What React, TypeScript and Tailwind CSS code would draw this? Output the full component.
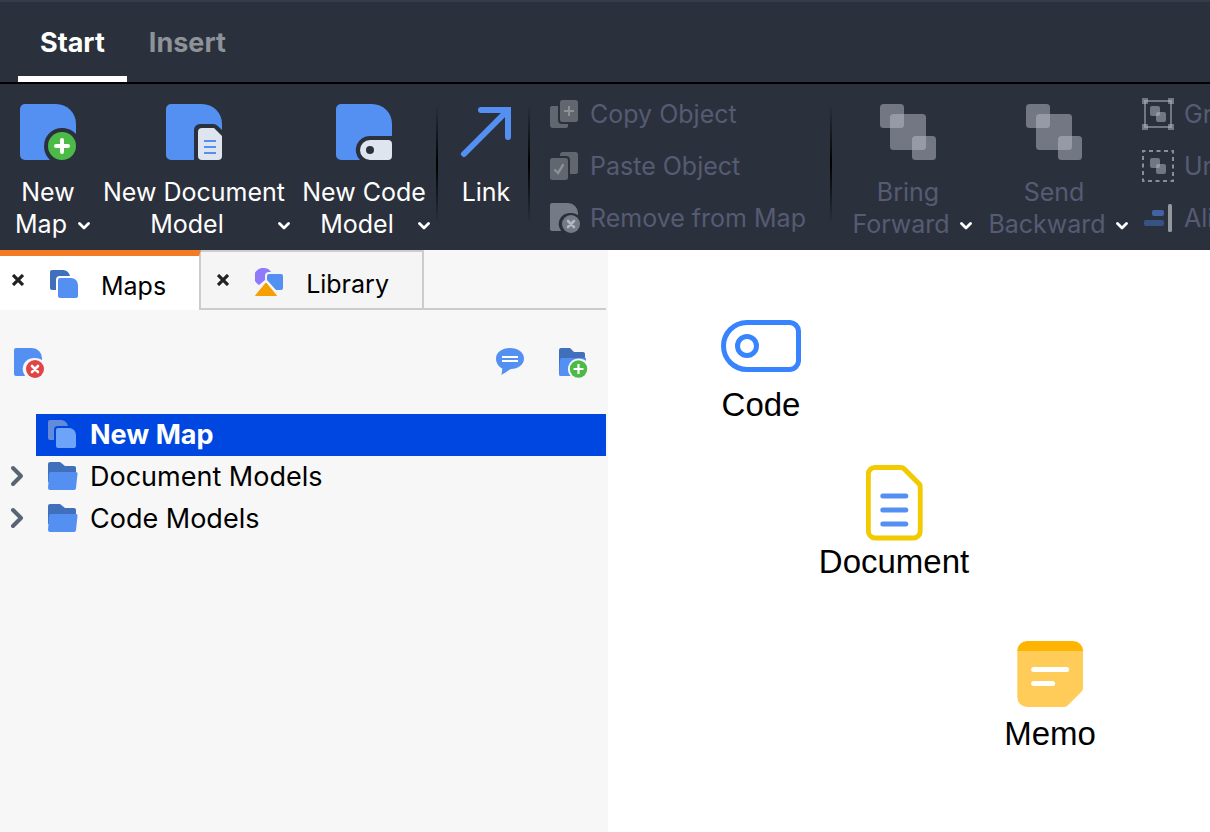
import React, { useState } from "react";
import clsx from "clsx";

const BLUE = "#5490F2";
const DARK_BLUE = "#4070BB";

// Icons

const Chevron = () => (
  <svg viewBox="0 0 12 8" className="mt-1 h-2 w-3 shrink-0" fill="none" stroke="white" strokeWidth="2.8" strokeLinecap="round" strokeLinejoin="round">
    <path d="M1.5 1.6 6 6.1l4.500-4.500" />
  </svg>
);

const ExpandArrow = () => (
  <svg viewBox="0 0 14 22" className="h-[22px] w-3.5" fill="none" stroke="#596572" strokeWidth="4" strokeLinecap="round" strokeLinejoin="round">
    <path d="M3 3l8 8-8 8" />
  </svg>
);

const CloseIcon = () => (
  <svg viewBox="0 0 12 12" className="h-3 w-3" stroke="#222" strokeWidth="3.200">
    <path d="M1 1l10 10M11 1L1 11" />
  </svg>
);

const NewMapIcon = () => (
  <svg viewBox="0 0 56 56" className="h-14 w-14">
    <path d="M5 0h31a20 20 0 0 1 20 20v31a5 5 0 0 1-5 5H5a5 5 0 0 1-5-5V5a5 5 0 0 1 5-5z" fill={BLUE} />
    <path d="M42 24c6 0 11 2.500 14.500 6.500V57H31c-4.300-3.500-7-9-7-15a18 18 0 0 1 18-18z" fill="#2B313C" />
    <circle cx="42" cy="42" r="14" fill="#4BBA47" />
    <path d="M42 36v12M36 42h12" stroke="white" strokeWidth="4" strokeLinecap="round" />
  </svg>
);

const NewDocumentIcon = () => (
  <svg viewBox="0 0 56 56" className="h-14 w-14">
    <path d="M5 0h31a20 20 0 0 1 20 20v6l-4.500-4.300A6 6 0 0 0 47.500 20H34a6 6 0 0 0-6 6v30H5a5 5 0 0 1-5-5V5a5 5 0 0 1 5-5z" fill={BLUE} />
    <path d="M36 24h12l8 8v20a4 4 0 0 1-4 4H36a4 4 0 0 1-4-4V28a4 4 0 0 1 4-4z" fill="#DFE5EE" />
    <path d="M38 37h12M38 43h12M38 49h12" stroke={BLUE} strokeWidth="2" />
  </svg>
);

const NewCodeIcon = () => (
  <svg viewBox="0 0 56 56" className="h-14 w-14">
    <path d="M5 0h31a20 20 0 0 1 20 20v12H34a14 14 0 0 0-10 24H5a5 5 0 0 1-5-5V5a5 5 0 0 1 5-5z" fill={BLUE} />
    <path d="M34 36h18a4 4 0 0 1 4 4v12a4 4 0 0 1-4 4H34a10 10 0 0 1 0-20z" fill="#DFE5EE" />
    <circle cx="34" cy="46" r="4" fill="#2B313C" />
  </svg>
);

const LinkIcon = () => (
  <svg viewBox="0 0 56 56" className="h-14 w-14" fill="none" stroke={BLUE} strokeWidth="6" strokeLinecap="round">
    <path d="M6 50 49 7" />
    <path d="M23 6h27v27" />
  </svg>
);

const CopyIcon = () => (
  <svg viewBox="0 0 28 28" className="h-7 w-7">
    <path d="M2 6h6v14a4 4 0 0 0 4 4h6v2a2 2 0 0 1-2 2H3a3 3 0 0 1-3-3V8a2 2 0 0 1 2-2z" fill="#61666F" />
    <rect x="10" width="18" height="22" rx="2.500" fill="#61666F" />
    <path d="M19 6v10M14 11h10" stroke="#8B8F97" strokeWidth="2" />
  </svg>
);

const PasteIcon = () => (
  <svg viewBox="0 0 28 28" className="h-7 w-7">
    <path d="M10 4V3a3 3 0 0 1 3-3h12.500A2.500 2.500 0 0 1 28 2.500v17a2.500 2.500 0 0 1-2.500 2.500H20V8a4 4 0 0 0-4-4z" fill="#61666F" />
    <rect y="6" width="18" height="22" rx="2.500" fill="#61666F" />
    <path d="M5 18l3 3 5-8" fill="none" stroke="#8B8F97" strokeWidth="2.400" strokeLinecap="round" />
  </svg>
);

interface IRemoveIcon {
  body: string;
  badge: string;
  cross: string;
  gap: string;
}

const RemoveIcon: React.FC<IRemoveIcon> = ({ body, badge, cross, gap }) => (
  <svg viewBox="0 0 30 30" className="h-[30px] w-[30px]">
    <path d="M2 0h16a10 10 0 0 1 10 10v18H2a2 2 0 0 1-2-2V2a2 2 0 0 1 2-2z" fill={body} />
    <path d="M21 10c3.500 0 7 1.500 9 4v16H13.500a11 11 0 0 1 7.500-20z" fill={gap} />
    <circle cx="21" cy="21" r="9" fill={badge} />
    <path d="M18 18l6 6M24 18l-6 6" stroke={cross} strokeWidth="2.600" strokeLinecap="round" />
  </svg>
);

const OrderIcon = () => (
  <svg viewBox="0 0 56 56" className="h-14 w-14" fill="#B9BECA" fillOpacity=".5">
    <rect width="24" height="24" rx="3.500" />
    <rect x="10" y="10" width="36" height="36" rx="3.500" />
    <rect x="32" y="32" width="24" height="24" rx="3.500" />
  </svg>
);

const GroupIcon = () => (
  <svg viewBox="0 0 32 32" className="h-8 w-8" fill="#B9BECA" fillOpacity=".5">
    <rect x="3" y="3" width="26" height="26" fill="none" stroke="#73777F" strokeWidth="2" />
    <path d="M0 0h6v6H0zM26 0h6v6h-6zM0 26h6v6H0zM26 26h6v6h-6z" />
    <rect x="8" y="8" width="10" height="10" rx="2" />
    <rect x="14" y="14" width="10" height="10" rx="2" />
  </svg>
);

const UngroupIcon = () => (
  <svg viewBox="0 0 32 32" className="h-8 w-8" fill="#B9BECA" fillOpacity=".5">
    <rect x="1" y="1" width="30" height="30" fill="none" stroke="#8A8E96" strokeWidth="2" strokeDasharray="4 3.500" strokeDashoffset="1.500" />
    <rect x="8" y="8" width="10" height="10" rx="2" />
    <rect x="14" y="14" width="10" height="10" rx="2" />
  </svg>
);

const AlignIcon = () => (
  <svg viewBox="0 0 32 32" className="h-8 w-8">
    <rect x="10" y="8" width="12" height="6" rx="2" fill="#4163A3" />
    <rect x="2" y="18" width="20" height="6" rx="2" fill="#365383" />
    <rect x="26" y="2" width="4" height="28" rx="1.500" fill="#94979E" />
  </svg>
);

const MapsIcon: React.FC<{ back?: string; front?: string }> = ({ back = DARK_BLUE, front = BLUE }) => (
  <svg viewBox="0 0 28 28" className="h-7 w-7 shrink-0">
    <path d="M2 0h11a7 7 0 0 1 7 6H10a4 4 0 0 0-4 4v10H2a2 2 0 0 1-2-2V2a2 2 0 0 1 2-2z" fill={back} />
    <path d="M10 8h11a7 7 0 0 1 7 7v11a2 2 0 0 1-2 2H10a2 2 0 0 1-2-2V10a2 2 0 0 1 2-2z" fill={front} />
  </svg>
);

const LibraryIcon = () => (
  <svg viewBox="0 0 28 28" className="h-7 w-7 shrink-0">
    <path d="M9 0c3 0 5.500 1.400 7 4h-2a4 4 0 0 0-4 4v4l-6 5A9 9 0 0 1 9 0z" fill="#8F7AFB" />
    <path d="M14 6h12a2 2 0 0 1 2 2v12a2 2 0 0 1-2 2h-5L12 12V8a2 2 0 0 1 2-2z" fill={BLUE} />
    <path d="M11 15 21.500 27.500H.500z" fill="#F59F00" stroke="#F59F00" strokeLinejoin="round" />
  </svg>
);

const CommentIcon = () => (
  <svg viewBox="0 0 28 28" className="h-7 w-7">
    <path d="M14 0c8 0 14 4.500 14 10.500S22 21 15 21c-3 1.500-6 4-9.500 6l.8-6.500C2.500 18.500 0 15 0 10.500 0 4.500 6 0 14 0z" fill={BLUE} />
    <path d="M6 9h16M6 13h16" stroke="white" strokeWidth="2" />
  </svg>
);

const AddFolderIcon = () => (
  <svg viewBox="0 0 30 30" className="h-[30px] w-[30px]">
    <path d="M3 0h9l4 4h9a2 2 0 0 1 2 2v20H1V2a2 2 0 0 1 2-2z" fill={DARK_BLUE} />
    <path d="M4 10h24v18H2.500A1.500 1.500 0 0 1 1 26.500L2 12a2 2 0 0 1 2-2z" fill={BLUE} />
    <path d="M20 10.500c4 0 7 1 10 4.500v15H15a10.500 10.500 0 0 1 5-19.500z" fill="#F7F7F7" />
    <circle cx="20.500" cy="21" r="8.700" fill="#4BBA47" />
    <path d="M20.500 16v10M15.500 21h10" stroke="white" strokeWidth="2.200" />
  </svg>
);

const FolderIcon = () => (
  <svg viewBox="0 0 30 28" className="h-7 w-[30px] shrink-0">
    <path d="M2 0h10l5 4h9a2 2 0 0 1 2 2v14H0V2a2 2 0 0 1 2-2z" fill={DARK_BLUE} />
    <path d="M3 10h25a1.500 1.500 0 0 1 1.500 1.700L28 26a2 2 0 0 1-2 2H2a2 2 0 0 1-2-2l1-14a2 2 0 0 1 2-2z" fill={BLUE} />
  </svg>
);

const CodeNodeIcon = () => (
  <svg viewBox="0 0 80 52" className="h-[52px] w-20" fill="none" stroke="#3884FF" strokeWidth="5">
    <path d="M26 2.500h42a9 9 0 0 1 9.500 9.500v28a9 9 0 0 1-9.500 9.500H26a23.500 23.500 0 0 1 0-47z" />
    <circle cx="26" cy="26" r="9.500" />
  </svg>
);

const DocumentNodeIcon = () => (
  <svg viewBox="0 0 57 76" className="h-[76px] w-[57px]" fill="none" strokeWidth="5">
    <path d="M9 2.500h26a5 5 0 0 1 3.500 1.500L52.500 18a5 5 0 0 1 2 4v44a7 7 0 0 1-7 7H9a7 7 0 0 1-6.500-7V9A6.500 6.500 0 0 1 9 2.500z" stroke="#F2CA00" />
    <path d="M17 31h23M17 45h23M17 59h23" stroke={BLUE} strokeLinecap="round" />
  </svg>
);

const MemoNodeIcon = () => (
  <svg viewBox="0 0 66 66" className="h-[66px] w-[66px]">
    <path d="M0 9h66v38a6 6 0 0 1-2 4L51 64a6 6 0 0 1-4 2H10A10 10 0 0 1 0 56z" fill="#FFCC59" />
    <path d="M10 0h46a10 10 0 0 1 10 10H0A10 10 0 0 1 10 0z" fill="#FFB500" />
    <path d="M16.500 28.500h33M16.500 42.500h19" stroke="white" strokeWidth="5" strokeLinecap="round" />
  </svg>
);

// Ribbon

interface IRibbonButton {
  icon: React.ReactNode;
  lines: string[];
  className: string;
  disabled?: boolean;
}

const RibbonButton: React.FC<IRibbonButton> = ({ icon, lines, className, disabled }) => (
  <button
    disabled={disabled}
    className={clsx("flex shrink-0 flex-col items-center whitespace-nowrap", disabled ? "text-[#565B73]" : "text-white", className)}
  >
    {icon}
    <span className="mt-4">{lines[0]}</span>
    {lines[1] && (
      <span className="flex w-full items-center gap-0.5">
        <span className="flex-1">{lines[1]}</span>
        <Chevron />
      </span>
    )}
  </button>
);

const SmallRibbonButton: React.FC<{ icon: React.ReactNode; label: string }> = ({ icon, label }) => (
  <button disabled className="flex h-8 items-center gap-2.5 whitespace-nowrap text-[#565B73]">
    <span className="min-w-[30px] shrink-0">{icon}</span>
    {label}
  </button>
);

const Separator = () => (
  <div className="h-30 w-0.5 shrink-0 bg-linear-to-b from-transparent via-black to-transparent" />
);

// Side panel

interface IPanelTab {
  icon: React.ReactNode;
  label: string;
  active: boolean;
  onSelect: () => void;
}

const PanelTab: React.FC<IPanelTab> = ({ icon, label, active, onSelect }) => (
  <div
    className={clsx(
      "flex h-15 items-center border-r-2 border-r-[#CCCCCC] pr-[33px]",
      active
        ? "border-t-6 border-t-[#F47B26] bg-white pt-0.5 pl-3"
        : "border-y-2 border-y-[#CCCCCC] bg-[#F5F5F5] pt-1 pl-4"
    )}
  >
    <button aria-label={`Close ${label}`} className={active ? "mb-2" : "mb-1"}>
      <CloseIcon />
    </button>
    <button role="tab" aria-selected={active} onClick={onSelect} className="ml-[26px] flex items-center gap-[23px]">
      {icon}
      <span className="pt-1">{label}</span>
    </button>
  </div>
);

interface ITreeRow {
  icon: React.ReactNode;
  label: string;
  selected?: boolean;
}

const TreeRow: React.FC<ITreeRow> = ({ icon, label, selected }) => (
  <li className="flex h-[42px]">
    <div className="flex w-9 items-center pb-0.5 pl-2.5">
      {!selected && (
        <button aria-label={`Expand ${label}`}>
          <ExpandArrow />
        </button>
      )}
    </div>
    <button className={clsx("flex flex-1 items-center pl-3", selected && "bg-[#0047E1] font-bold text-white")}>
      <span className="w-[42px] pb-0.5">{icon}</span>
      {label}
    </button>
  </li>
);

interface INode {
  label: string;
  icon: React.ReactNode;
  position: string;
}

// Nodes are placed by their horizontal centre
const nodes: INode[] = [
  { label: "Code", icon: <CodeNodeIcon />, position: "left-[153px] top-[70px] gap-[13px]" },
  { label: "Document", icon: <DocumentNodeIcon />, position: "left-[286px] top-[215px] gap-px" },
  { label: "Memo", icon: <MemoNodeIcon />, position: "left-[442px] top-[391px] gap-[7px]" },
];

const App = () => {
  const [ribbonTab, setRibbonTab] = useState("Start");
  const [panelTab, setPanelTab] = useState("Maps");

  return (
    <div className="flex min-h-screen flex-col overflow-hidden bg-white font-['Inter',sans-serif] text-[25px] leading-8 text-black">
      <header className="bg-[#2B313C]">
        <div role="tablist" className="flex h-[84px] border-t-2 border-b-2 border-t-[#343B49] border-b-black pl-4.5 text-[27px]">
          {["Start", "Insert"].map((tab) => (
            <button
              key={tab}
              role="tab"
              aria-selected={ribbonTab === tab}
              onClick={() => setRibbonTab(tab)}
              className={clsx(
                "border-b-6 px-[22px] pt-2 font-bold",
                ribbonTab === tab ? "border-white text-white" : "border-transparent text-[#8E9299]"
              )}
            >
              {tab}
            </button>
          ))}
        </div>

        <div className="flex h-[166px] items-start overflow-hidden pt-5 pl-1.5">
          <div className="flex shrink-0 gap-2">
            <RibbonButton icon={<NewMapIcon />} lines={["New", "Map"]} className="w-21" />
            <RibbonButton icon={<NewDocumentIcon />} lines={["New Document", "Model"]} className="w-48" />
            <RibbonButton icon={<NewCodeIcon />} lines={["New Code", "Model"]} className="w-33" />
          </div>
          <div className="w-1.5 shrink-0" />
          <Separator />
          <RibbonButton icon={<LinkIcon />} lines={["Link"]} className="mr-1 ml-2.5 w-19" />
          <Separator />
          <div className="-mt-1.5 flex w-[280px] shrink-0 flex-col gap-5 pl-5">
            <SmallRibbonButton icon={<CopyIcon />} label="Copy Object" />
            <SmallRibbonButton icon={<PasteIcon />} label="Paste Object" />
            <SmallRibbonButton
              icon={<RemoveIcon body="#737B87" badge="#737B87" cross="#B3B8C0" gap="#2B313C" />}
              label="Remove from Map"
            />
          </div>
          <div className="w-5 shrink-0" />
          <Separator />
          <div className="ml-3 flex shrink-0 gap-2">
            <RibbonButton disabled icon={<OrderIcon />} lines={["Bring", "Forward"]} className="w-32" />
            <RibbonButton disabled icon={<OrderIcon />} lines={["Send", "Backward"]} className="w-37" />
          </div>
          <div className="-mt-1.5 ml-3.5 flex shrink-0 flex-col gap-5">
            <SmallRibbonButton icon={<GroupIcon />} label="Group" />
            <SmallRibbonButton icon={<UngroupIcon />} label="Ungroup" />
            <SmallRibbonButton icon={<AlignIcon />} label="Align" />
          </div>
        </div>
      </header>

      <main className="flex flex-1">
        <aside className="w-[608px] shrink-0 bg-[#F7F7F7] pr-0.5">
          <div role="tablist" className="flex">
            <PanelTab icon={<MapsIcon />} label="Maps" active={panelTab === "Maps"} onSelect={() => setPanelTab("Maps")} />
            <PanelTab
              icon={<LibraryIcon />}
              label="Library"
              active={panelTab === "Library"}
              onSelect={() => setPanelTab("Library")}
            />
            <div className="flex-1 border-b-2 border-[#CCCCCC]" />
          </div>

          <div className="flex items-start pt-[38px] pr-4.5 pl-3.5">
            <button aria-label="Delete map">
              <RemoveIcon body={BLUE} badge="#E14444" cross="white" gap="#F7F7F7" />
            </button>
            <button aria-label="Add comment" className="mr-[34px] ml-auto">
              <CommentIcon />
            </button>
            <button aria-label="New folder">
              <AddFolderIcon />
            </button>
          </div>

          <ul className="mt-9 text-[27px]">
            <TreeRow selected icon={<MapsIcon back="#628BD9" front="#6DA3F8" />} label="New Map" />
            <TreeRow icon={<FolderIcon />} label="Document Models" />
            <TreeRow icon={<FolderIcon />} label="Code Models" />
          </ul>
        </aside>

        <section className="relative flex-1">
          {nodes.map((node) => (
            <div
              key={node.label}
              className={clsx(
                "absolute flex -translate-x-1/2 flex-col items-center font-['Liberation_Sans',sans-serif] text-[33px] leading-10",
                node.position
              )}
            >
              {node.icon}
              <span>{node.label}</span>
            </div>
          ))}
        </section>
      </main>
    </div>
  );
};

export default App;
